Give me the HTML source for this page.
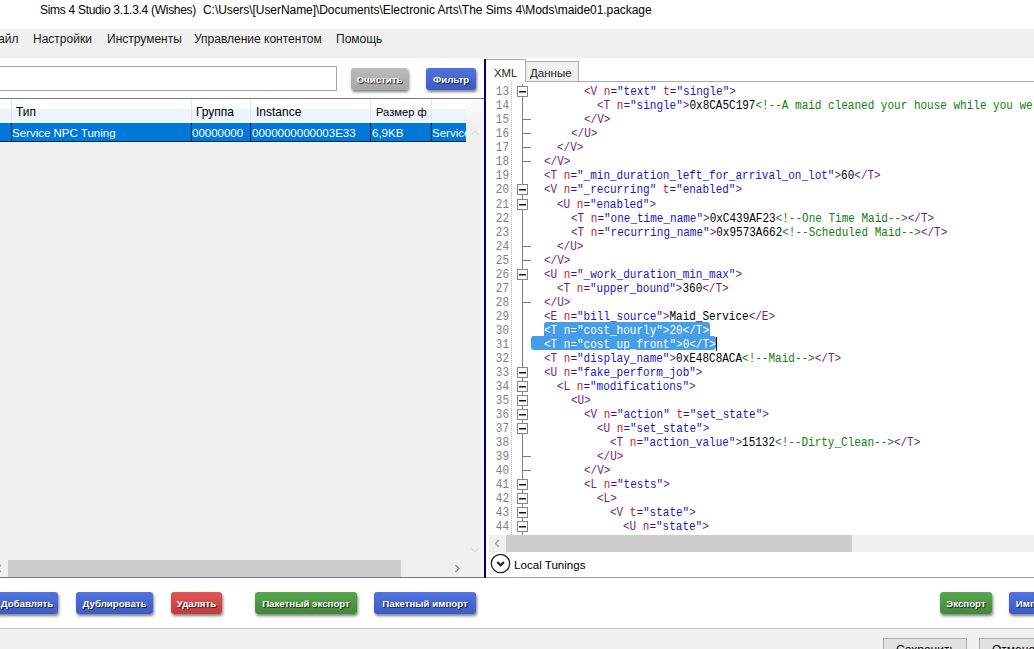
<!DOCTYPE html>
<html><head><meta charset="utf-8">
<style>
*{margin:0;padding:0;box-sizing:border-box}
html,body{width:1034px;height:649px;overflow:hidden;background:#fff;font-family:"Liberation Sans",sans-serif;}
.a{position:absolute}
.t{position:absolute;white-space:pre;font-size:12px;color:#000;line-height:14px}
#title{left:40px;top:3px;font-size:11.75px;line-height:14px;color:#000}
#menu{left:0;top:29px;width:1034px;height:29px;background:#f0f0f0}
.mi{position:absolute;top:3px;font-size:12px;line-height:14px;color:#1a1a1a;white-space:pre}
.btn{position:absolute;height:22px;border-radius:3px;color:#fff;font-weight:bold;font-size:9.7px;line-height:23px;text-align:center;white-space:pre;
 text-shadow:1px 1px 1px rgba(0,0,0,.75);box-shadow:1px 2px 3px rgba(0,0,0,.5)}
.blue{background:linear-gradient(#4f72dc,#3c5cc4)}
.gray{background:linear-gradient(#bcbcbc,#a6a6a6)}
.red{background:linear-gradient(#df5656,#c23c3c)}
.green{background:linear-gradient(#5ba552,#3f8a38)}
#ed{position:absolute;left:486px;top:82px;width:548px;height:453px;overflow:hidden;background:#fff}
.ln,.cl{position:absolute;font-family:"Liberation Mono",monospace;font-size:12px;line-height:14px;white-space:pre;transform:scaleX(0.9167);transform-origin:0 0}
.ln{left:486px;width:23px;text-align:right;color:#808080;transform-origin:100% 0}
.cl{color:#000}
.g{color:#7a1a7a}.r{color:#d01818}.b{color:#1818c0}.c{color:#108010}
.sel, .sel span{color:#fff}
.fb{position:absolute;left:517px;width:11px;height:11px;border:1px solid #858585;background:#fff}
.fb:after{content:"";position:absolute;left:1px;top:4px;width:7px;height:1px;background:#111;box-shadow:0 1px 0 rgba(0,0,0,.45)}
.ft{position:absolute;left:522px;width:9px;height:1px;background:#7a7a7a}
.hdr{position:absolute;top:105px;font-size:12px;line-height:14px;white-space:pre;color:#000}
.row{position:absolute;top:126px;font-size:11.5px;line-height:14px;white-space:pre;color:#fff}
</style></head><body>
<div class="t" style="left:40px;top:3px;font-size:12px;letter-spacing:-0.29px">Sims 4 Studio 3.1.3.4 (Wishes)</div><div class="t" style="left:203px;top:3px;font-size:12px;letter-spacing:-0.055px">C:\Users\[UserName]\Documents\Electronic Arts\The Sims 4\Mods\maide01.package</div>
<div id="menu" class="a">
 <div class="mi" style="left:-2px">айл</div>
 <div class="mi" style="left:33px">Настройки</div>
 <div class="mi" style="left:107px">Инструменты</div>
 <div class="mi" style="left:194px">Управление контентом</div>
 <div class="mi" style="left:336px">Помощь</div>
</div>

<!-- left panel -->
<div class="a" style="left:0;top:58px;width:484px;height:40px;background:#fff"></div>
<div class="a" style="left:-5px;top:66px;width:342px;height:25px;border:1px solid #a2a4a8;background:#fff"></div>
<div class="btn gray" style="left:351px;top:68px;width:57px">Очистить</div>
<div class="btn blue" style="left:426px;top:68px;width:50px">Фильтр</div>

<div class="a" style="left:0;top:98px;width:484px;height:479px;background:#f0f0f0;border-top:1px solid #737d88"></div>
<!-- header -->
<div class="a" style="left:0;top:99px;width:466px;height:24px;background:linear-gradient(#fff 0,#fff 10px,#ecf5fc 10px,#ecf5fc 100%)"></div>
<div class="a" style="left:466px;top:99px;width:16px;height:30px;background:linear-gradient(#fcfcfc,#f0f0f0)"></div>
<div class="a" style="left:11px;top:99px;width:1px;height:24px;background:#e2e5ea"></div>
<div class="a" style="left:191px;top:99px;width:1px;height:24px;background:#e2e5ea"></div>
<div class="a" style="left:250px;top:99px;width:1px;height:24px;background:#e2e5ea"></div>
<div class="a" style="left:370px;top:99px;width:1px;height:24px;background:#e2e5ea"></div>
<div class="a" style="left:431px;top:99px;width:1px;height:24px;background:#e2e5ea"></div>
<div class="hdr" style="left:16px">Тип</div>
<div class="hdr" style="left:196px">Группа</div>
<div class="hdr" style="left:256px">Instance</div>
<div class="hdr" style="left:376px;font-size:11.2px">Размер ф</div>
<!-- selected row -->
<div class="a" style="left:0;top:123px;width:466px;height:19px;background:#0078d7;border-bottom:1px solid #0b2a4a"></div>
<div class="a" style="left:11px;top:123px;width:1px;height:19px;background:#0b2a4a"></div>
<div class="a" style="left:191px;top:123px;width:1px;height:19px;background:#0b2a4a"></div>
<div class="a" style="left:250px;top:123px;width:1px;height:19px;background:#0b2a4a"></div>
<div class="a" style="left:370px;top:123px;width:1px;height:19px;background:#0b2a4a"></div>
<div class="a" style="left:431px;top:123px;width:1px;height:19px;background:#0b2a4a"></div>
<div class="a" style="left:12px;top:123px;width:454px;height:18px;overflow:hidden">
 <div class="row" style="left:0;top:3px">Service NPC Tuning</div>
 <div class="row" style="left:180px;top:3px">00000000</div>
 <div class="row" style="left:240px;top:3px">0000000000003E33</div>
 <div class="row" style="left:360px;top:3px">6,9KB</div>
 <div class="row" style="left:420px;top:3px">Service NPC Tuning</div>
</div>
<!-- h scrollbar left -->
<div class="a" style="left:8px;top:560px;width:393px;height:17px;background:#cdcdcd"></div>
<svg class="a" style="left:0;top:560px" width="484" height="17"><path d="M1 5 L-2.5 8.5 L1 12" fill="none" stroke="#a0a0a0" stroke-width="1.3"/><path d="M455.5 5 L459 8.5 L455.5 12" fill="none" stroke="#8a8a8a" stroke-width="1.3"/></svg>
<svg class="a" style="left:466px;top:99px" width="18" height="461"><path d="M5 36 L9 32 L13 36" fill="none" stroke="#dcdcdc" stroke-width="1.2"/><path d="M5 449 L9 453 L13 449" fill="none" stroke="#dcdcdc" stroke-width="1.2"/></svg>

<!-- navy line -->
<div class="a" style="left:482px;top:99px;width:2px;height:478px;background:#f3f4fb"></div><div class="a" style="left:484px;top:59px;width:2px;height:519px;background:#000068"></div>

<!-- right panel -->
<div class="a" style="left:486px;top:58px;width:548px;height:520px;background:#fff"></div>
<!-- tabs -->
<div class="a" style="left:525px;top:81px;width:509px;height:1px;background:#acacac"></div>
<div class="a" style="left:525px;top:61px;width:54px;height:21px;background:#f0f0f0;border:1px solid #acacac"></div>
<div class="a" style="left:486px;top:59px;width:40px;height:24px;background:#fff;border:1px solid #acacac;border-bottom:none;border-left:none"></div>
<div class="t" style="left:494px;top:65.5px;font-size:11.4px;color:#1e1e1e">XML</div>
<div class="t" style="left:530px;top:66px;font-size:11.5px;color:#1e1e1e">Данные</div>

<div id="ed">
 <div class="a" style="left:25px;top:0;width:1px;height:453px;border-left:1px dotted #b4b4b4"></div>
 <div class="a" style="left:36px;top:2px;width:1px;height:451px;background:#808080"></div>
 <div class="a" style="left:58px;top:239.9px;width:166px;height:14.5px;background:#469ee8;border-radius:3px 3px 0 0"></div>
 <div class="a" style="left:45px;top:253.9px;width:184.8px;height:14.6px;background:#469ee8;border-radius:3px 3px 4px 3px"></div>
 <div class="a" style="left:230px;top:255px;width:1.3px;height:13.5px;background:#000"></div>
</div>
<div class="a" style="left:0;top:0;width:0;height:0">
<div style="position:absolute;left:486px;top:82px;width:548px;height:453px;overflow:hidden">
<div style="position:absolute;left:-486px;top:-82px;width:1034px;height:649px">
<div class="ln" style="top:85.20px">13</div>
<div class="cl" style="top:85.20px;left:583.8px"><span class="g">&lt;V</span> <span class="r">n</span><span class="b">="text"</span> <span class="r">t</span><span class="b">="single"</span><span class="g">&gt;</span></div>
<div class="fb" style="top:86.20px"></div>
<div class="ln" style="top:99.24px">14</div>
<div class="cl" style="top:99.24px;left:597.0px"><span class="g">&lt;T</span> <span class="r">n</span><span class="b">="single"</span><span class="g">&gt;</span>0x8CA5C197<span class="c">&lt;!--A maid cleaned your house while you were away--&gt;</span></div>
<div class="ln" style="top:113.28px">15</div>
<div class="cl" style="top:113.28px;left:583.8px"><span class="g">&lt;/V</span><span class="g">&gt;</span></div>
<div class="ft" style="top:119.28px"></div>
<div class="ln" style="top:127.32px">16</div>
<div class="cl" style="top:127.32px;left:570.6px"><span class="g">&lt;/U</span><span class="g">&gt;</span></div>
<div class="ft" style="top:133.32px"></div>
<div class="ln" style="top:141.36px">17</div>
<div class="cl" style="top:141.36px;left:557.4px"><span class="g">&lt;/V</span><span class="g">&gt;</span></div>
<div class="ft" style="top:147.36px"></div>
<div class="ln" style="top:155.40px">18</div>
<div class="cl" style="top:155.40px;left:544.2px"><span class="g">&lt;/V</span><span class="g">&gt;</span></div>
<div class="ft" style="top:161.40px"></div>
<div class="ln" style="top:169.44px">19</div>
<div class="cl" style="top:169.44px;left:544.2px"><span class="g">&lt;T</span> <span class="r">n</span><span class="b">="_min_duration_left_for_arrival_on_lot"</span><span class="g">&gt;</span>60<span class="g">&lt;/T</span><span class="g">&gt;</span></div>
<div class="ln" style="top:183.48px">20</div>
<div class="cl" style="top:183.48px;left:544.2px"><span class="g">&lt;V</span> <span class="r">n</span><span class="b">="_recurring"</span> <span class="r">t</span><span class="b">="enabled"</span><span class="g">&gt;</span></div>
<div class="fb" style="top:184.48px"></div>
<div class="ln" style="top:197.52px">21</div>
<div class="cl" style="top:197.52px;left:557.4px"><span class="g">&lt;U</span> <span class="r">n</span><span class="b">="enabled"</span><span class="g">&gt;</span></div>
<div class="fb" style="top:198.52px"></div>
<div class="ln" style="top:211.56px">22</div>
<div class="cl" style="top:211.56px;left:570.6px"><span class="g">&lt;T</span> <span class="r">n</span><span class="b">="one_time_name"</span><span class="g">&gt;</span>0xC439AF23<span class="c">&lt;!--One Time Maid--&gt;</span><span class="g">&lt;/T</span><span class="g">&gt;</span></div>
<div class="ln" style="top:225.60px">23</div>
<div class="cl" style="top:225.60px;left:570.6px"><span class="g">&lt;T</span> <span class="r">n</span><span class="b">="recurring_name"</span><span class="g">&gt;</span>0x9573A662<span class="c">&lt;!--Scheduled Maid--&gt;</span><span class="g">&lt;/T</span><span class="g">&gt;</span></div>
<div class="ln" style="top:239.64px">24</div>
<div class="cl" style="top:239.64px;left:557.4px"><span class="g">&lt;/U</span><span class="g">&gt;</span></div>
<div class="ft" style="top:245.64px"></div>
<div class="ln" style="top:253.68px">25</div>
<div class="cl" style="top:253.68px;left:544.2px"><span class="g">&lt;/V</span><span class="g">&gt;</span></div>
<div class="ft" style="top:259.68px"></div>
<div class="ln" style="top:267.72px">26</div>
<div class="cl" style="top:267.72px;left:544.2px"><span class="g">&lt;U</span> <span class="r">n</span><span class="b">="_work_duration_min_max"</span><span class="g">&gt;</span></div>
<div class="fb" style="top:268.72px"></div>
<div class="ln" style="top:281.76px">27</div>
<div class="cl" style="top:281.76px;left:557.4px"><span class="g">&lt;T</span> <span class="r">n</span><span class="b">="upper_bound"</span><span class="g">&gt;</span>360<span class="g">&lt;/T</span><span class="g">&gt;</span></div>
<div class="ln" style="top:295.80px">28</div>
<div class="cl" style="top:295.80px;left:544.2px"><span class="g">&lt;/U</span><span class="g">&gt;</span></div>
<div class="ft" style="top:301.80px"></div>
<div class="ln" style="top:309.84px">29</div>
<div class="cl" style="top:309.84px;left:544.2px"><span class="g">&lt;E</span> <span class="r">n</span><span class="b">="bill_source"</span><span class="g">&gt;</span>Maid_Service<span class="g">&lt;/E</span><span class="g">&gt;</span></div>
<div class="ln" style="top:323.88px">30</div>
<div class="cl sel" style="top:323.88px;left:544.2px"><span class="g">&lt;T</span> <span class="r">n</span><span class="b">="cost_hourly"</span><span class="g">&gt;</span>20<span class="g">&lt;/T</span><span class="g">&gt;</span></div>
<div class="ln" style="top:337.92px">31</div>
<div class="cl sel" style="top:337.92px;left:544.2px"><span class="g">&lt;T</span> <span class="r">n</span><span class="b">="cost_up_front"</span><span class="g">&gt;</span>0<span class="g">&lt;/T</span><span class="g">&gt;</span></div>
<div class="ln" style="top:351.96px">32</div>
<div class="cl" style="top:351.96px;left:544.2px"><span class="g">&lt;T</span> <span class="r">n</span><span class="b">="display_name"</span><span class="g">&gt;</span>0xE48C8ACA<span class="c">&lt;!--Maid--&gt;</span><span class="g">&lt;/T</span><span class="g">&gt;</span></div>
<div class="ln" style="top:366.00px">33</div>
<div class="cl" style="top:366.00px;left:544.2px"><span class="g">&lt;U</span> <span class="r">n</span><span class="b">="fake_perform_job"</span><span class="g">&gt;</span></div>
<div class="fb" style="top:367.00px"></div>
<div class="ln" style="top:380.04px">34</div>
<div class="cl" style="top:380.04px;left:557.4px"><span class="g">&lt;L</span> <span class="r">n</span><span class="b">="modifications"</span><span class="g">&gt;</span></div>
<div class="fb" style="top:381.04px"></div>
<div class="ln" style="top:394.08px">35</div>
<div class="cl" style="top:394.08px;left:570.6px"><span class="g">&lt;U</span><span class="g">&gt;</span></div>
<div class="fb" style="top:395.08px"></div>
<div class="ln" style="top:408.12px">36</div>
<div class="cl" style="top:408.12px;left:583.8px"><span class="g">&lt;V</span> <span class="r">n</span><span class="b">="action"</span> <span class="r">t</span><span class="b">="set_state"</span><span class="g">&gt;</span></div>
<div class="fb" style="top:409.12px"></div>
<div class="ln" style="top:422.16px">37</div>
<div class="cl" style="top:422.16px;left:597.0px"><span class="g">&lt;U</span> <span class="r">n</span><span class="b">="set_state"</span><span class="g">&gt;</span></div>
<div class="fb" style="top:423.16px"></div>
<div class="ln" style="top:436.20px">38</div>
<div class="cl" style="top:436.20px;left:610.2px"><span class="g">&lt;T</span> <span class="r">n</span><span class="b">="action_value"</span><span class="g">&gt;</span>15132<span class="c">&lt;!--Dirty_Clean--&gt;</span><span class="g">&lt;/T</span><span class="g">&gt;</span></div>
<div class="ln" style="top:450.24px">39</div>
<div class="cl" style="top:450.24px;left:597.0px"><span class="g">&lt;/U</span><span class="g">&gt;</span></div>
<div class="ft" style="top:456.24px"></div>
<div class="ln" style="top:464.28px">40</div>
<div class="cl" style="top:464.28px;left:583.8px"><span class="g">&lt;/V</span><span class="g">&gt;</span></div>
<div class="ft" style="top:470.28px"></div>
<div class="ln" style="top:478.32px">41</div>
<div class="cl" style="top:478.32px;left:583.8px"><span class="g">&lt;L</span> <span class="r">n</span><span class="b">="tests"</span><span class="g">&gt;</span></div>
<div class="fb" style="top:479.32px"></div>
<div class="ln" style="top:492.36px">42</div>
<div class="cl" style="top:492.36px;left:597.0px"><span class="g">&lt;L</span><span class="g">&gt;</span></div>
<div class="fb" style="top:493.36px"></div>
<div class="ln" style="top:506.40px">43</div>
<div class="cl" style="top:506.40px;left:610.2px"><span class="g">&lt;V</span> <span class="r">t</span><span class="b">="state"</span><span class="g">&gt;</span></div>
<div class="fb" style="top:507.40px"></div>
<div class="ln" style="top:520.44px">44</div>
<div class="cl" style="top:520.44px;left:623.4px"><span class="g">&lt;U</span> <span class="r">n</span><span class="b">="state"</span><span class="g">&gt;</span></div>
<div class="fb" style="top:521.44px"></div>
<div class="ln" style="top:534.48px">45</div>
<div class="cl" style="top:534.48px;left:610.2px"><span class="g">&lt;/V</span><span class="g">&gt;</span></div>
<div class="ft" style="top:540.48px"></div>
</div></div></div>
<!-- editor h scrollbar -->
<div class="a" style="left:489px;top:535px;width:545px;height:17px;background:#f0f0f0"></div>
<div class="a" style="left:506px;top:535px;width:346px;height:17px;background:#cdcdcd"></div>
<svg class="a" style="left:489px;top:535px" width="17" height="17"><path d="M10 5 L6.5 8.5 L10 12" fill="none" stroke="#a6a6a6" stroke-width="1.3"/></svg>
<!-- local tunings -->
<svg class="a" style="left:486px;top:550px" width="30" height="28" viewBox="0 0 30 28"><circle cx="14.5" cy="13.5" r="9.2" fill="none" stroke="#262626" stroke-width="1.3"/><path d="M11.3 12.1 L14.6 15.3 L17.9 12.1" fill="none" stroke="#1e1e1e" stroke-width="2.1"/></svg>
<div class="t" style="left:514px;top:558px;font-size:11.6px">Local Tunings</div>

<!-- bottom -->
<div class="a" style="left:0;top:577px;width:484px;height:1px;background:#6a7d90"></div><div class="a" style="left:486px;top:577px;width:548px;height:1px;background:#a0a0a0"></div>
<div class="a" style="left:0;top:578px;width:1034px;height:50px;background:#fff"></div>
<div class="a" style="left:0;top:628px;width:1034px;height:1px;background:#c8c8c8"></div>
<div class="a" style="left:0;top:629px;width:1034px;height:20px;background:#f0f0f0"></div>

<div class="btn blue" style="left:-4px;top:592px;width:62px">Добавлять</div>
<div class="btn blue" style="left:76px;top:592px;width:77px">Дублировать</div>
<div class="btn red" style="left:171px;top:592px;width:51px">Удалять</div>
<div class="btn green" style="left:255px;top:592px;width:102px">Пакетный экспорт</div>
<div class="btn blue" style="left:374px;top:592px;width:102px">Пакетный импорт</div>
<div class="btn green" style="left:940px;top:592px;width:52px">Экспорт</div>
<div class="btn blue" style="left:1009px;top:592px;width:50px">Импорт</div>
<div class="a" style="left:883px;top:638px;width:84px;height:22px;background:#e1e1e1;border:1px solid #adadad"></div>
<div class="t" style="left:896px;top:643px;font-size:12px">Сохранить</div>
<div class="a" style="left:979px;top:638px;width:84px;height:22px;background:#e1e1e1;border:1px solid #adadad"></div>
<div class="t" style="left:992px;top:643px;font-size:12px">Отмена</div>
</body></html>
